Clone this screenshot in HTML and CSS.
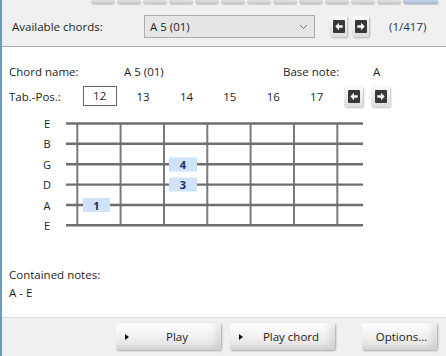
FILE: index.html
```html
<!DOCTYPE html>
<html>
<head>
<meta charset="utf-8">
<link rel="stylesheet" href="styles.css">
</head>
<body>
<div class="window">
  <div class="toolstrip">
    <span class="tb"></span><span class="tb"></span><span class="tb"></span><span class="tb"></span>
    <span class="tb"></span><span class="tb"></span><span class="tb"></span><span class="tb"></span>
    <span class="tb"></span><span class="tb"></span><span class="tb"></span><span class="tb"></span>
    <span class="tb tb-active"></span>
  </div>
  <div class="chordbar">
    <span class="lbl-avail">Available chords:</span>
    <div class="combo"><span>A 5 (01)</span>
      <svg class="chev" width="9" height="6" viewBox="0 0 9 6"><path d="M1 1 L4.5 4.5 L8 1" fill="none" stroke="#777" stroke-width="1"/></svg>
    </div>
    <button class="arrowbtn first">
      <svg width="12" height="13" viewBox="0 0 12 13"><rect x="0" y="0" width="12" height="13" rx="1" fill="#383838"/><path d="M2.3 6.5 L6 2.8 L6 5.2 L9.7 5.2 L9.7 7.8 L6 7.8 L6 10.2 Z" fill="#fff"/></svg>
    </button>
    <button class="arrowbtn">
      <svg width="12" height="13" viewBox="0 0 12 13"><rect x="0" y="0" width="12" height="13" rx="1" fill="#383838"/><path d="M9.7 6.5 L6 2.8 L6 5.2 L2.3 5.2 L2.3 7.8 L6 7.8 L6 10.2 Z" fill="#fff"/></svg>
    </button>
    <span class="count">(1/417)</span>
  </div>
  <div class="panel">
    <div class="row1">
      <span class="c1">Chord name:</span>
      <span class="c2">A 5 (01)</span>
      <span class="c3">Base note:</span>
      <span class="c4">A</span>
    </div>
    <div class="row2">
      <span class="tablbl">Tab.-Pos.:</span>
      <span class="pos"><span class="posbox">12</span></span>
      <span class="pos">13</span>
      <span class="pos">14</span>
      <span class="pos">15</span>
      <span class="pos">16</span>
      <span class="pos">17</span>
      <button class="arrowbtn small first">
        <svg width="12" height="13" viewBox="0 0 12 13"><rect x="0" y="0" width="12" height="13" rx="1" fill="#383838"/><path d="M2.3 6.5 L6 2.8 L6 5.2 L9.7 5.2 L9.7 7.8 L6 7.8 L6 10.2 Z" fill="#fff"/></svg>
      </button>
      <button class="arrowbtn small">
        <svg width="12" height="13" viewBox="0 0 12 13"><rect x="0" y="0" width="12" height="13" rx="1" fill="#383838"/><path d="M9.7 6.5 L6 2.8 L6 5.2 L2.3 5.2 L2.3 7.8 L6 7.8 L6 10.2 Z" fill="#fff"/></svg>
      </button>
    </div>
    <svg class="fretboard" width="444" height="124" viewBox="2 110 444 124">
      <g class="strlbl">
        <text x="47" y="127.5">E</text>
        <text x="47" y="148">B</text>
        <text x="47" y="168.5">G</text>
        <text x="47" y="189">D</text>
        <text x="47" y="209.5">A</text>
        <text x="47" y="230">E</text>
      </g>
      <g stroke="#7a7a7a" stroke-width="2">
        <line x1="77.3" y1="123" x2="77.3" y2="225"/>
        <line x1="120.6" y1="123" x2="120.6" y2="225"/>
        <line x1="164" y1="123" x2="164" y2="225"/>
        <line x1="207.3" y1="123" x2="207.3" y2="225"/>
        <line x1="250.6" y1="123" x2="250.6" y2="225"/>
        <line x1="294" y1="123" x2="294" y2="225"/>
        <line x1="337.3" y1="123" x2="337.3" y2="225"/>
      </g>
      <g stroke="#6e6e6e" stroke-width="2.4">
        <line x1="66" y1="123.5" x2="363" y2="123.5"/>
        <line x1="66" y1="143.8" x2="363" y2="143.8"/>
        <line x1="66" y1="164.2" x2="363" y2="164.2"/>
        <line x1="66" y1="184.6" x2="363" y2="184.6"/>
        <line x1="66" y1="205" x2="363" y2="205"/>
        <line x1="66" y1="225.3" x2="363" y2="225.3"/>
      </g>
      <g class="finger">
        <rect x="83" y="198" width="27" height="14"/>
        <rect x="169" y="157.5" width="28" height="14"/>
        <rect x="169" y="177.5" width="28" height="14"/>
      </g>
      <g class="fingertxt">
        <text x="96.5" y="209.5">1</text>
        <text x="183" y="169">4</text>
        <text x="183" y="189">3</text>
      </g>
    </svg>
    <div class="notes">
      <div>Contained notes:</div>
      <div>A - E</div>
    </div>
  </div>
  <div class="bottombar">
    <button class="btn play"><span class="tri"></span><span class="btxt">Play</span></button>
    <button class="btn playchord"><span class="tri"></span><span class="btxt">Play chord</span></button>
    <button class="btn options"><span class="btxt">Options...</span></button>
  </div>
</div>
</body>
</html>
```
FILE: styles.css
```css
* { box-sizing: border-box; }
html, body { margin: 0; padding: 0; }
body {
  width: 446px;
  height: 356px;
  overflow: hidden;
  background: #f0f0f0;
  font-family: "Open Sans", "Segoe UI", "Liberation Sans", sans-serif;
  font-size: 11.5px;
  color: #1e1e1e;
}
.window {
  width: 446px;
  height: 356px;
  border-left: 2px solid #6f95c4;
  display: flex;
  flex-direction: column;
}
.toolstrip {
  height: 5px;
  display: flex;
  gap: 3px;
  padding-left: 89px;
  align-items: flex-start;
}
.tb {
  width: 23px;
  height: 4px;
  background: linear-gradient(to bottom, #e2e2e2, #c4c4c4);
  border-radius: 0 0 2px 2px;
  box-shadow: 1px 1px 1px rgba(0,0,0,0.15);
}
.tb-active {
  width: 35px;
  background: linear-gradient(to bottom, #c9d6e6, #a4b7cd);
}
.chordbar {
  height: 41px;
  display: flex;
  align-items: center;
  padding-left: 10px;
  padding-top: 2px;
}
.lbl-avail { width: 132px; }
.combo {
  width: 171px;
  height: 23px;
  border: 1px solid #acacac;
  background: #e6e6e6;
  display: flex;
  align-items: center;
  justify-content: space-between;
  padding: 0 6px 0 5px;
}
.chev { margin-top: 1px; }
.arrowbtn {
  width: 17px;
  height: 21px;
  padding: 0;
  border: none;
  border-radius: 2px;
  background: linear-gradient(to bottom, #fafafa, #dcdcdc);
  box-shadow: 1px 1px 2px rgba(0,0,0,0.25);
  display: flex;
  align-items: center;
  justify-content: center;
  margin-left: 5px;
}
.arrowbtn.first { margin-left: 15px; }
.count {
  margin-left: 20px;
  color: #2c3050;
}
.panel {
  height: 272px;
  background: #fff;
  border-top: 1px solid #a6a6a6;
  border-bottom: 1px solid #dadada;
  padding-left: 7px;
}
.row1 {
  display: flex;
  height: 16px;
  line-height: 16px;
  margin-top: 17px;
}
.c1 { width: 115px; }
.c2 { width: 159px; }
.c3 { width: 90px; }
.row2 {
  display: flex;
  align-items: center;
  height: 20px;
  margin-top: 6px;
}
.tablbl { width: 69px; }
.pos {
  width: 43.4px;
  text-align: center;
  display: flex;
  justify-content: center;
}
.posbox {
  width: 34px;
  height: 20px;
  line-height: 18px;
  border: 1px solid #6a6a6a;
  text-align: center;
}
.arrowbtn.small { width: 19px; height: 21px; }
.row2 .arrowbtn.first { margin-left: 6px; }
.row2 .arrowbtn { margin-left: 8px; }
.fretboard {
  display: block;
  margin-left: -7px;
  margin-top: 4px;
}
.strlbl text {
  font-family: "Open Sans", "Segoe UI", "Liberation Sans", sans-serif;
  font-size: 11px;
  fill: #222;
  text-anchor: middle;
}
.finger rect { fill: #cfe2fa; }
.fingertxt text {
  font-family: "Open Sans", "Liberation Sans", sans-serif;
  font-size: 11px;
  font-weight: 700;
  fill: #1f2a5c;
  text-anchor: middle;
}
.notes {
  margin-top: 32px;
  line-height: 18px;
}
.bottombar {
  flex: 1;
  display: flex;
  align-items: center;
  padding-left: 114px;
  padding-bottom: 1px;
}
.btn {
  height: 27px;
  border: none;
  border-radius: 2px;
  background: linear-gradient(to bottom, #fefefe 0%, #f2f2f2 45%, #dedede 100%);
  box-shadow: 1px 1px 2px rgba(0,0,0,0.3), inset -6px -2px 6px rgba(0,0,0,0.08);
  font-family: "Open Sans", "Segoe UI", "Liberation Sans", sans-serif;
  font-size: 11.5px;
  color: #1e1e1e;
  display: flex;
  align-items: center;
  padding: 0;
}
.play { width: 105px; }
.playchord { width: 105px; margin-left: 9px; }
.options { width: 75px; margin-left: 27px; justify-content: center; padding-left: 6px; }
.tri {
  width: 0; height: 0;
  border-left: 4px solid #111;
  border-top: 3px solid transparent;
  border-bottom: 3px solid transparent;
  margin-left: 9px;
}
.btxt { flex: 1; text-align: center; padding-right: 2px; }
.play .btxt { padding-left: 6px; }
.playchord .btxt { padding-left: 6px; }
```
